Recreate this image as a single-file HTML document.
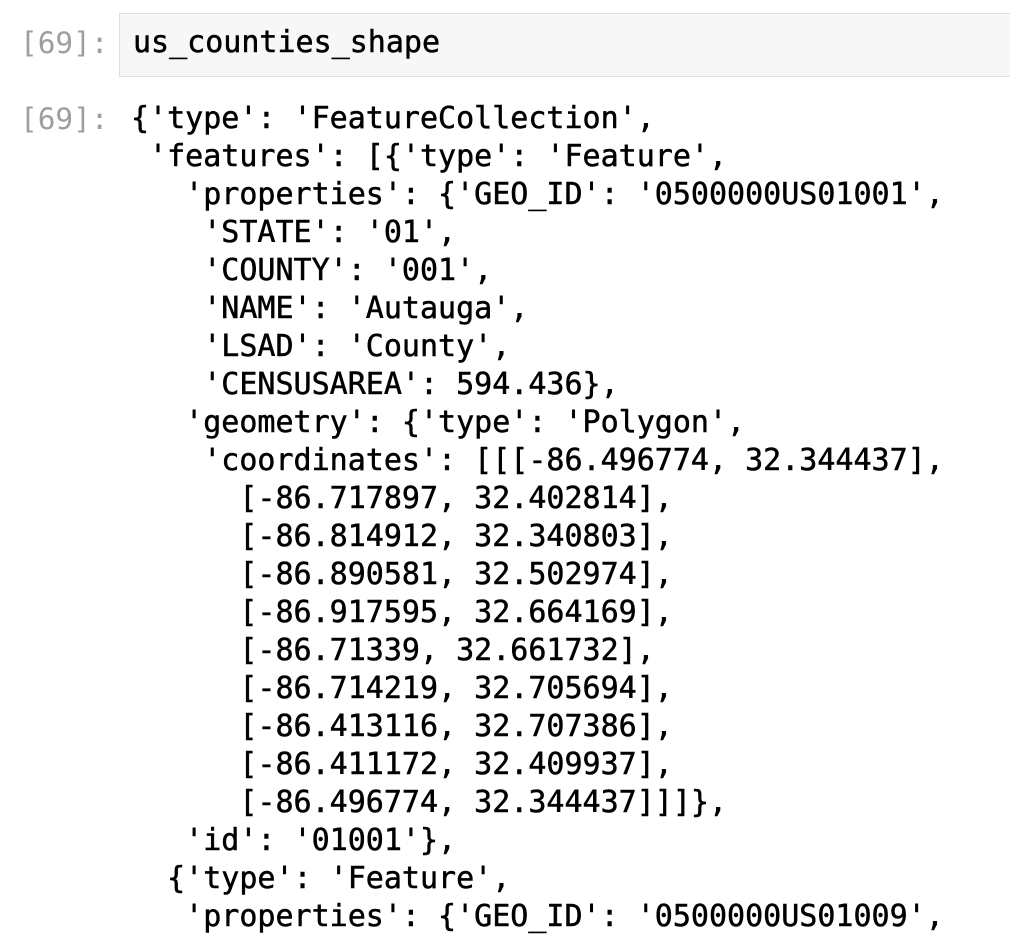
<!DOCTYPE html>
<html><head><meta charset="utf-8"><style>
html,body{margin:0;padding:0;background:#fff;width:1010px;height:938px;overflow:hidden}
.mono{font-family:"DejaVu Sans Mono","Liberation Mono",monospace;font-size:30px;white-space:pre;color:#000;-webkit-text-stroke:0.5px #000}
.p{position:absolute;left:20px;color:#9e9e9e;font-family:"DejaVu Sans Mono","Liberation Mono",monospace;font-size:29.4px;white-space:pre;line-height:38px}
.box{position:absolute;left:119px;top:13px;width:900px;height:62px;background:#f7f7f7;border:1px solid #dfdfdf}
.in{position:absolute;left:133px;top:24px;line-height:38px}
.out{position:absolute;left:131px;top:100px;line-height:38px}
</style></head><body>
<div class="p" style="top:24px">[69]:</div>
<div class="box"></div>
<div class="mono in">us_counties_shape</div>
<div class="p" style="top:100px">[69]:</div>
<div class="mono out">{'type': 'FeatureCollection',
 'features': [{'type': 'Feature',
   'properties': {'GEO_ID': '0500000US01001',
    'STATE': '01',
    'COUNTY': '001',
    'NAME': 'Autauga',
    'LSAD': 'County',
    'CENSUSAREA': 594.436},
   'geometry': {'type': 'Polygon',
    'coordinates': [[[-86.496774, 32.344437],
      [-86.717897, 32.402814],
      [-86.814912, 32.340803],
      [-86.890581, 32.502974],
      [-86.917595, 32.664169],
      [-86.71339, 32.661732],
      [-86.714219, 32.705694],
      [-86.413116, 32.707386],
      [-86.411172, 32.409937],
      [-86.496774, 32.344437]]]},
   'id': '01001'},
  {'type': 'Feature',
   'properties': {'GEO_ID': '0500000US01009',</div>
</body></html>
